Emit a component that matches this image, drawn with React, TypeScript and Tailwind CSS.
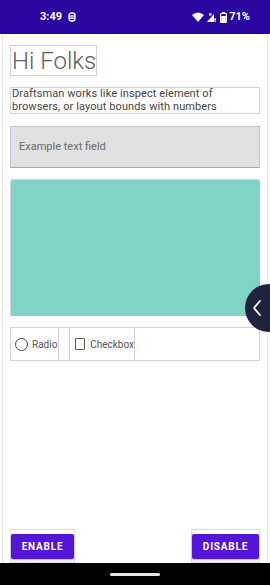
import React from 'react'

const font = { fontFamily: 'Roboto, "Noto Sans", sans-serif' }

function StatusBar() {
    return (
        <div className="h-[34px] bg-[#2b06a1] flex items-center justify-between pl-[40px] pr-[20px] text-white text-[11px] font-bold shrink-0">
            <div className="flex items-center gap-[6px]">
                <span>3:49</span>
                <svg width="8" height="10" viewBox="0 0 8 10" fill="none" stroke="white" strokeWidth="1.3">
                    <rect x="1" y="1" width="6" height="8" rx="2.5" />
                    <line x1="1" y1="4" x2="7" y2="4" />
                    <line x1="1" y1="6" x2="7" y2="6" />
                </svg>
            </div>
            <div className="flex items-center gap-[2px]">
                <svg width="12" height="10" viewBox="0 0 12 10"><path d="M0 3 Q6 -2 12 3 L6 10 Z" fill="white" /></svg>
                <svg width="10" height="10" viewBox="0 0 10 10">
                    <path d="M1 10 L8 2 L8 10 Z" fill="white" />
                    <rect x="8.5" y="6" width="1.2" height="4" fill="white" />
                    <text x="3" y="4" fontSize="4" fill="white">R</text>
                </svg>
                <svg width="7" height="11" viewBox="0 0 7 11" className="ml-[2px]">
                    <rect x="2" y="0" width="3" height="1.5" fill="white" />
                    <rect x="0.6" y="1.5" width="5.8" height="9" rx="0.8" fill="none" stroke="white" strokeWidth="1.2" />
                    <rect x="1.2" y="4" width="4.6" height="6" fill="white" />
                </svg>
                <span>71%</span>
            </div>
        </div>
    )
}

export default function App() {
    return (
        <div className="relative w-[270px] h-[585px] flex flex-col bg-white overflow-hidden" style={font}>
            <StatusBar />
            <div className="flex-1 mx-[2px] border-x border-[#e7e5f1] px-[7px] pt-[11px] flex flex-col">
                <div className="self-start h-[31px] w-[87px] border border-[#d3cfe9] flex items-center pl-[1px] text-[24px] font-light whitespace-nowrap text-[#5e5e5e] leading-none">Hi Folks</div>
                <div className="mt-[11px] h-[27px] border border-[#d3cfe9] px-[1px] text-[11px] leading-[12.5px] text-[#454545] tracking-[0.1px]">
                    Draftsman works like inspect element of browsers, or layout bounds with numbers
                </div>
                <div className="mt-[12px] h-[42px] bg-[#e1e1e1] border border-[#c9c4de] border-b-[#a8a2c6] flex items-center pl-[8px] text-[11px] text-[#6a6a6a]">
                    Example text field
                </div>
                <div className="mt-[11px] h-[137px] bg-[#80d4c5] rounded-tl-[3px] rounded-tr-[3px] border-t border-l border-[#d3cfe9]"></div>
                <div className="mt-[11px] h-[34px] border border-[#d3cfe9] flex items-center text-[10px] text-[#555]">
                    <div className="h-full flex items-center pl-[4px] border-r border-[#d3cfe9] w-[48px]">
                        <span className="w-[13px] h-[13px] rounded-full border-[1.5px] border-[#444] mr-[4px]"></span>
                        Radio
                    </div>
                    <div className="h-full w-[10px]"></div>
                    <div className="h-full flex items-center pl-[5px] border-x border-[#d3cfe9] w-[66px]">
                        <span className="w-[12px] h-[12px] rounded-[1px] border-[1.5px] border-[#555] mr-[5px]"></span>
                        Checkbox
                    </div>
                </div>
                <div className="mt-auto mb-[0px] flex justify-between items-end">
                    <div className="border border-[#dcd8ee] h-[34px] w-[65px] flex items-center justify-center">
                        <button className="w-[63px] h-[25px] bg-[#5515d9] rounded-[2px] text-white text-[10px] font-bold tracking-[0.8px] shadow-[0_1px_2px_rgba(0,0,0,0.3)]">ENABLE</button>
                    </div>
                    <div className="border border-[#dcd8ee] h-[34px] w-[69px] flex items-center justify-center">
                        <button className="w-[67px] h-[25px] bg-[#5515d9] rounded-[2px] text-white text-[10px] font-bold tracking-[0.8px] shadow-[0_1px_2px_rgba(0,0,0,0.3)]">DISABLE</button>
                    </div>
                </div>
            </div>
            <div className="h-[22px] bg-black flex items-center justify-center shrink-0">
                <div className="w-[50px] h-[3px] rounded-full bg-[#e5e5e5]"></div>
            </div>
            <div className="absolute left-[245px] top-[284px] w-[48px] h-[48px] rounded-full bg-[#1f2340] flex items-center pl-[7px]">
                <svg width="10" height="16" viewBox="0 0 10 16" fill="none" stroke="white" strokeWidth="1.8" strokeLinecap="round" strokeLinejoin="round">
                    <path d="M8 1 L2 8 L8 15" />
                </svg>
            </div>
        </div>
    )
}
